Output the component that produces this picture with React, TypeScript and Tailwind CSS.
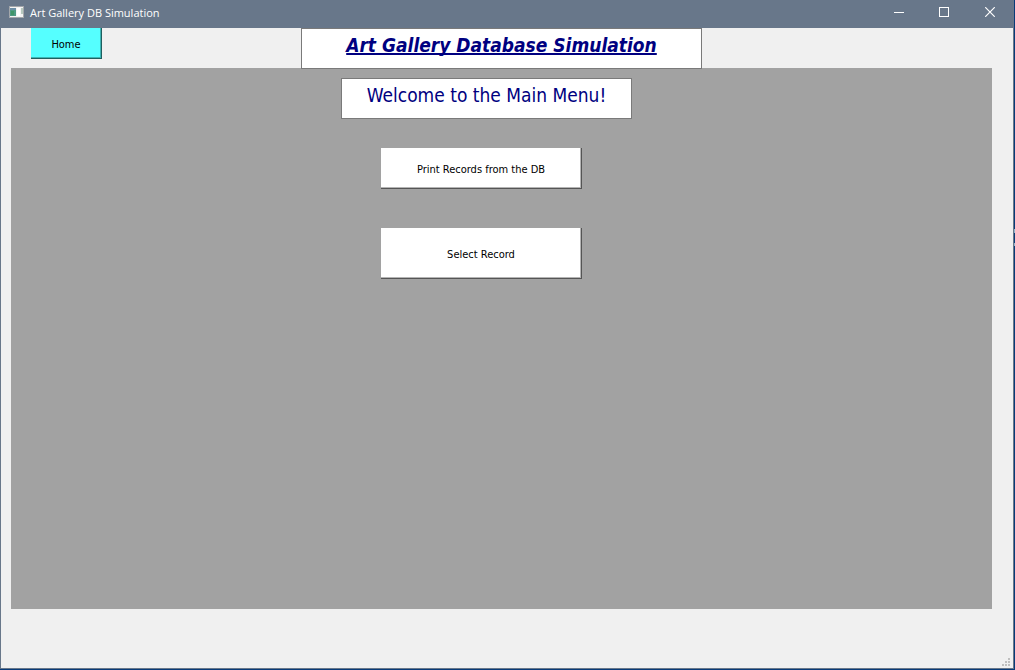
import React from "react";

const textFont = "font-['DejaVu_Sans_Condensed','DejaVu_Sans',sans-serif]";

function AppIcon() {
  return (
    <svg width="15" height="12" viewBox="0 0 15 12" shapeRendering="crispEdges" aria-hidden="true">
      <rect width="15" height="12" fill="#a3a7ab" />
      <rect x="1" y="1" width="13" height="10" fill="#f4f4f4" />
      <rect x="1" y="2" width="6" height="8" fill="#6c8fa6" />
      <rect x="1" y="4" width="6" height="6" fill="#4f9a84" />
      <rect x="2" y="5" width="3" height="4" fill="#3f9568" />
      <rect x="8" y="2" width="3" height="8" fill="#ffffff" />
      <rect x="12" y="2" width="2" height="6" fill="#b7c9bf" />
    </svg>
  );
}

function TitleBar() {
  return (
    <header className="flex h-7 shrink-0 items-start bg-[#68778a] text-white">
      <div className="flex h-[26px] flex-1 items-center gap-[6px] pl-2">
        <div className="pb-[2px]">
          <AppIcon />
        </div>
        <h1 className="font-['Open_Sans','Noto_Sans',sans-serif] text-[11px] leading-4">Art Gallery DB Simulation</h1>
      </div>
      <div className="flex">
        <button type="button" aria-label="Minimize" className="flex h-6 w-[46px] items-center justify-center">
          <svg width="10" height="10" viewBox="0 0 10 10" shapeRendering="crispEdges">
            <rect y="5" width="10" height="1" fill="#fff" />
          </svg>
        </button>
        <button type="button" aria-label="Maximize" className="flex h-6 w-[45px] items-center pl-[17px]">
          <svg width="10" height="10" viewBox="0 0 10 10" shapeRendering="crispEdges">
            <rect x="0.5" y="0.5" width="9" height="9" fill="none" stroke="#fff" />
          </svg>
        </button>
        <button type="button" aria-label="Close" className="flex h-6 w-[46px] items-center justify-center">
          <svg width="10" height="10" viewBox="0 0 10 10">
            <path d="M0.2 0.2 9.8 9.8M9.8 0.2 0.2 9.8" fill="none" stroke="#fff" strokeWidth="1.2" />
          </svg>
        </button>
      </div>
    </header>
  );
}

function MenuButton({ label, className }: { label: string; className: string }) {
  return (
    <button
      type="button"
      className={`w-[201px] border-r border-b border-[#555555] bg-white pt-[3px] text-[11px] leading-[14px] text-black shadow-[inset_-1px_-1px_0_#b4b4b4] ${className}`}
    >
      {label}
    </button>
  );
}

function SizeGrip() {
  return (
    <svg width="8" height="8" viewBox="0 0 8 8" shapeRendering="crispEdges" fill="#bfbfbf" aria-hidden="true">
      <rect x="6" y="0" width="2" height="2" />
      <rect x="3" y="3" width="2" height="2" />
      <rect x="6" y="3" width="2" height="2" />
      <rect x="0" y="6" width="2" height="2" />
      <rect x="3" y="6" width="2" height="2" />
      <rect x="6" y="6" width="2" height="2" />
    </svg>
  );
}

export default function App() {
  return (
    <div className={`relative flex min-h-screen flex-col bg-[#083a78] pr-px pb-px ${textFont}`}>
      <div className="flex flex-1 flex-col border-r border-b border-l border-[#68778a] bg-[#f0f0f0]">
        <TitleBar />
        <main className="flex flex-1 flex-col pr-[21px] pl-[10px]">
          <div className="grid h-10 grid-cols-[1fr_401px_1fr] items-start">
            <nav className="flex pl-5">
              <button
                type="button"
                className="h-[31px] w-[71px] border-r border-b border-[#1f5f5f] bg-[#55ffff] pt-[3px] text-[11px] leading-[14px] text-black shadow-[inset_-1px_-1px_0_#3cb4b4]"
              >
                Home
              </button>
            </nav>
            <h2 className="relative h-[41px] border border-[#7a7a7a] bg-white pt-1 text-center text-[19px] leading-6 font-bold text-[#000080] italic underline decoration-2 [text-decoration-skip-ink:none]">
              Art Gallery Database Simulation
            </h2>
          </div>
          <section className="flex min-h-[541px] flex-col items-center bg-[#a2a2a2] pt-[10px]">
            <div className="pr-[30px]">
              <h3 className="h-[41px] w-[291px] border border-[#7a7a7a] bg-white pt-1 text-center text-[19px] leading-6 text-[#000080]">
                Welcome to the Main Menu!
              </h3>
            </div>
            <div className="flex flex-col gap-[39px] pt-[29px] pr-10">
              <MenuButton label="Print Records from the DB" className="h-[41px]" />
              <MenuButton label="Select Record" className="h-[51px]" />
            </div>
          </section>
        </main>
        <footer className="flex justify-end pr-[3px] pb-[2px]">
          <SizeGrip />
        </footer>
      </div>
      <span className="absolute top-[229px] right-0 h-1 w-px bg-[#8fb4cc]" />
      <span className="absolute top-[243px] right-0 h-[3px] w-px bg-[#8fb4cc]" />
    </div>
  );
}
